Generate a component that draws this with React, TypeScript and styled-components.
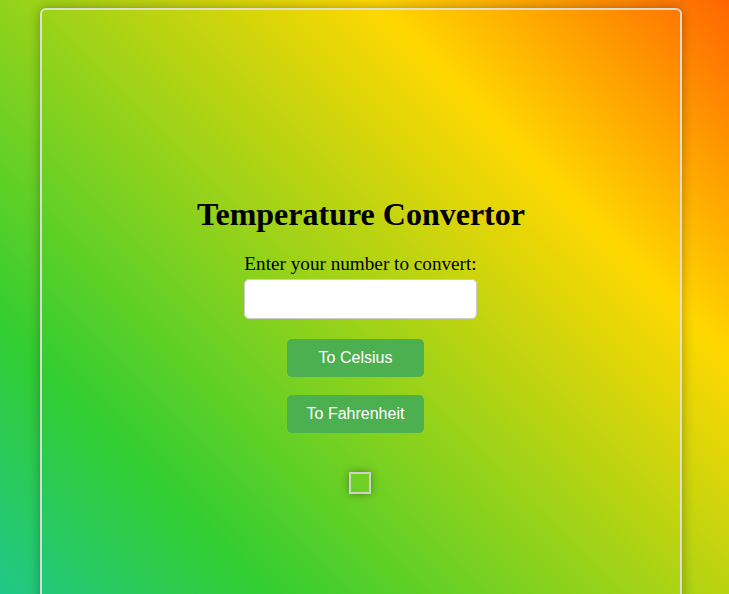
import React, { useState } from "react";
import styled, { createGlobalStyle } from "styled-components";

const GlobalStyle = createGlobalStyle`
  html, body {
    margin: 0;
    padding: 0;
    height: 100%;
    overflow: hidden;
  }
  body {
    font-family: "Liberation Serif", "Times New Roman", serif;
    background: linear-gradient(45deg, #20c888 0%, #32cd32 20%, #ffd700 73%, #ff6600 100%);
    background-attachment: fixed;
    min-height: 594px;
  }
`;

const Page = styled.div`
  padding: 8px 0 0 40px;
`;

const Card = styled.div`
  width: 642px;
  height: 640px;
  border: 2px solid rgba(225, 225, 225, 0.9);
  border-radius: 6px;
  box-shadow: 0 0 12px rgba(0, 0, 0, 0.3);
  display: flex;
  flex-direction: column;
  align-items: center;
  padding-top: 186px;
  box-sizing: border-box;
`;

const Title = styled.h1`
  font-size: 32px;
  font-weight: bold;
  margin: 0 0 20px;
  line-height: 37px;
  color: #000;
`;

const Field = styled.div`
  display: flex;
  flex-direction: column;
  align-items: stretch;
  margin-right: 1px;
`;

const Label = styled.label`
  font-size: 19.2px;
  line-height: 22px;
  color: #000;
  margin-bottom: 4px;
`;

const Input = styled.input`
  height: 40px;
  box-sizing: border-box;
  border: 1px solid #ccc;
  border-radius: 5px;
  background: #fff;
  font-size: 16px;
  padding: 0 10px;
  outline: none;
`;

const Button = styled.button<{ $top: number }>`
  width: 137px;
  height: 38px;
  margin-top: ${(p) => p.$top}px;
  margin-right: 11px;
  border: none;
  border-radius: 5px;
  background: #4caf50;
  color: #fff;
  font-family: "Liberation Sans", Arial, sans-serif;
  font-size: 16px;
  cursor: pointer;
`;

const Result = styled.div`
  margin-top: 39px;
  margin-right: 2px;
  width: 22px;
  height: 22px;
  box-sizing: border-box;
  border: 2px solid #cfcfcf;
  box-shadow: 0 0 8px rgba(0, 0, 0, 0.35);
  font-family: "Liberation Sans", Arial, sans-serif;
`;

export default function App() {
  const [value, setValue] = useState("");
  const [result, setResult] = useState("");

  const toCelsius = () => {
    const n = parseFloat(value);
    if (!isNaN(n)) setResult((((n - 32) * 5) / 9).toFixed(2) + " °C");
  };

  const toFahrenheit = () => {
    const n = parseFloat(value);
    if (!isNaN(n)) setResult(((n * 9) / 5 + 32).toFixed(2) + " °F");
  };

  return (
    <>
      <GlobalStyle />
      <Page>
        <Card>
          <Title>Temperature Convertor</Title>
          <Field>
            <Label htmlFor="num">Enter your number to convert:</Label>
            <Input id="num" type="text" value={value} onChange={(e) => setValue(e.target.value)} />
          </Field>
          <Button $top={20} onClick={toCelsius}>To Celsius</Button>
          <Button $top={18} onClick={toFahrenheit}>To Fahrenheit</Button>
          <Result>{result}</Result>
        </Card>
      </Page>
    </>
  );
}
